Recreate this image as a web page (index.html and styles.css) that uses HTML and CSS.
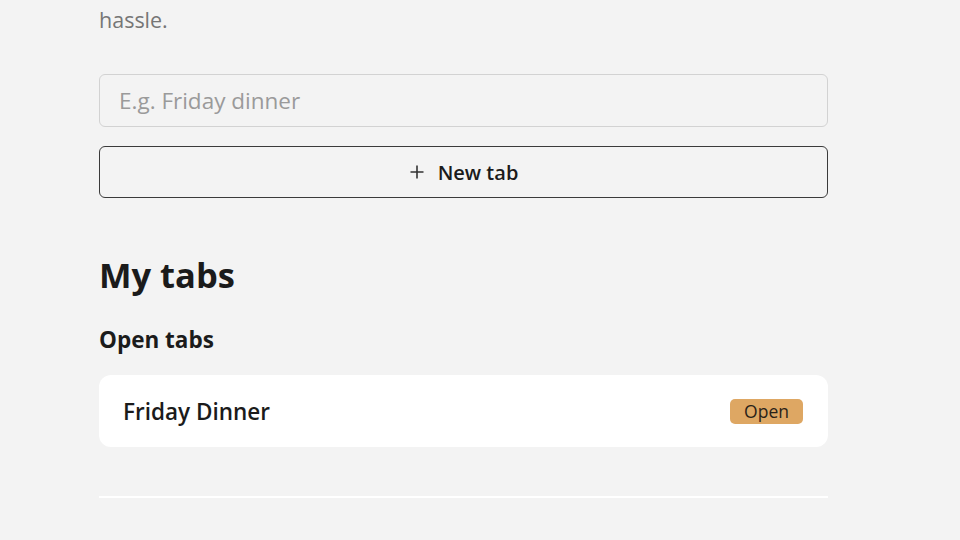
FILE: index.html
```html
<!DOCTYPE html>
<html lang="en">
<head>
<meta charset="utf-8">
<link rel="stylesheet" href="styles.css">
</head>
<body>
<main class="page">
  <p class="intro">hassle.</p>
  <form class="create">
    <input class="name-input" type="text" placeholder="E.g. Friday dinner">
    <button class="new-btn" type="button">
      <svg class="plus" width="16" height="16" viewBox="0 0 16 16" aria-hidden="true"><path d="M8 1.5v13M1.5 8h13" stroke="#333" stroke-width="1.6" fill="none"/></svg>
      <span>New tab</span>
    </button>
  </form>
  <h1 class="title">My tabs</h1>
  <h2 class="subtitle">Open tabs</h2>
  <ul class="tab-list">
    <li class="tab-card">
      <span class="tab-name">Friday Dinner</span>
      <span class="badge">Open</span>
    </li>
  </ul>
  <hr class="divider">
</main>
</body>
</html>
```
FILE: styles.css
```css
* { box-sizing: border-box; }
html, body { margin: 0; padding: 0; }
body {
  background: #f3f3f3;
  font-family: "Open Sans", "Noto Sans", sans-serif;
  color: #1b1b1b;
  height: 540px;
  overflow: hidden;
}
.page {
  width: 729px;
  margin-left: 99px;
  padding-top: 2px;
}
.intro {
  margin: 0;
  font-size: 21.5px;
  line-height: 36px;
  color: #767676;
}
.create {
  margin-top: 36px;
  display: flex;
  flex-direction: column;
  gap: 19px;
}
.name-input {
  height: 53px;
  width: 100%;
  border: 1.5px solid #d2d2d2;
  border-radius: 6px;
  background: #f3f3f3;
  padding: 0 19px;
  font-family: inherit;
  font-size: 22.5px;
  color: #333;
}
.name-input::placeholder { color: #9a9a9a; }
.new-btn {
  height: 52px;
  width: 100%;
  border: 1.5px solid #3a3a3a;
  border-radius: 6px;
  background: #f3f3f3;
  display: flex;
  align-items: center;
  justify-content: center;
  gap: 13px;
  font-family: inherit;
  font-size: 20px;
  font-weight: 600;
  color: #1b1b1b;
}
.title {
  margin: 54px 0 0;
  font-size: 34.5px;
  font-weight: 700;
  line-height: 46px;
}
.subtitle {
  margin: 27px 0 0;
  font-size: 22.5px;
  font-weight: 700;
  line-height: 30px;
}
.tab-list {
  list-style: none;
  margin: 20px 0 0;
  padding: 0;
}
.tab-card {
  height: 72px;
  background: #fff;
  border-radius: 12px;
  display: flex;
  align-items: center;
  justify-content: space-between;
  padding: 0 25px 0 24px;
}
.tab-name {
  font-size: 22.5px;
  font-weight: 600;
}
.badge {
  background: #dea763;
  border-radius: 5px;
  padding: 1px 14px 2px;
  font-size: 17.5px;
  color: #2a2218;
  line-height: 22px;
}
.divider {
  margin: 49px 0 0;
  border: 0;
  height: 2px;
  background: #fff;
}
```
